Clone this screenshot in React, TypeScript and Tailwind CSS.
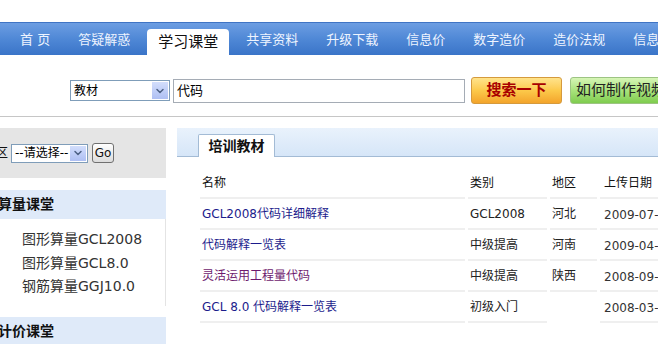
import { ChevronDown } from "lucide-react";

const FONT = "font-['DejaVu_Sans','Noto_Sans_CJK_SC',sans-serif]";

const NAV = ["首 页", "答疑解惑", "学习课堂", "共享资料", "升级下载", "信息价", "数字造价", "造价法规", "信息"];

const ROWS = [
  { name: "GCL2008代码详细解释", kind: "GCL2008", area: "河北", date: "2009-07-15", visited: false },
  { name: "代码解释一览表", kind: "中级提高", area: "河南", date: "2009-04-21", visited: false },
  { name: "灵活运用工程量代码", kind: "中级提高", area: "陕西", date: "2008-09-10", visited: true },
  { name: "GCL 8.0 代码解释一览表", kind: "初级入门", area: "", date: "2008-03-06", visited: false },
];

function FakeSelect({ value, width, height }: { value: string; width: string; height: string }) {
  return (
    <div className={`flex ${width} ${height} shrink-0 items-stretch border border-[#7f9db9] bg-white`}>
      <span className="flex flex-1 items-center pl-[3px] text-[12px] text-black">{value}</span>
      <span className="m-px flex w-[16px] items-center justify-center bg-gradient-to-b from-[#d3defc] to-[#aebff3]">
        <ChevronDown className="h-3 w-3 text-[#4d6185]" strokeWidth={3} />
      </span>
    </div>
  );
}

function SideHeader({ title }: { title: string }) {
  return (
    <div className="flex h-[29px] items-center bg-[#dfeaf9] pl-[10px] text-[14px] font-bold text-[#111]">{title}</div>
  );
}

export default function App() {
  return (
    <div className={`h-[344px] w-[658px] overflow-hidden bg-white ${FONT}`}>
      <div className="h-[22px]" />

      {/* main nav */}
      <div className="flex h-[33px] items-end gap-[28px] border-t border-[#3f74c4] bg-gradient-to-b from-[#6c9de2] via-[#4f88d6] to-[#3a74c8] pl-[20px] whitespace-nowrap">
        {NAV.map((item) =>
          item === "学习课堂" ? (
            <div
              key={item}
              className="-mx-[11px] flex h-[26px] shrink-0 items-center rounded-t-[4px] bg-white px-[11px] text-[15px] text-[#111]"
            >
              {item}
            </div>
          ) : (
            <div key={item} className="flex h-[31px] shrink-0 items-center text-[13px] text-[#eef4ff]">
              {item}
            </div>
          )
        )}
      </div>

      {/* search row */}
      <div className="h-[62px] border-b border-[#c6c6c6] pt-[22px]">
        <div className="flex h-[27px] items-center whitespace-nowrap">
          <div className="ml-[70px] shrink-0">
            <FakeSelect value="教材" width="w-[100px]" height="h-[21px]" />
          </div>
          <div className="ml-[3px] flex h-[24px] w-[292px] shrink-0 items-center border border-[#a5acb5] pl-[3px] text-[13px] text-black">
            代码
          </div>
          <button className="ml-[6px] h-[27px] w-[91px] shrink-0 rounded-[3px] border border-[#d59a3d] bg-gradient-to-b from-[#ffe38a] via-[#fcc94a] to-[#f3a42b] text-[15px] font-bold text-[#a80000]">
            搜索一下
          </button>
          <button className="ml-[8px] h-[27px] w-[100px] shrink-0 rounded-[3px] border border-[#9dc483] bg-gradient-to-b from-[#d6f5b6] via-[#a9e37c] to-[#7fcc4e] pl-[5px] text-left text-[15px] text-[#222]">
            如何制作视频
          </button>
        </div>
      </div>

      <div className="flex">
        {/* left column */}
        <div className="-ml-[40px] mt-[11px] w-[206px] shrink-0">
          <div className="flex h-[50px] items-center bg-[#e5e5e5] pl-[12px] text-[12px] whitespace-nowrap">
            <span className="text-[#111]">按地区</span>
            <div className="ml-[3px]">
              <FakeSelect value="--请选择--" width="w-[77px]" height="h-[19px]" />
            </div>
            <button className="ml-[4px] h-[20px] w-[22px] rounded-[3px] border border-[#707070] bg-gradient-to-b from-white to-[#dcdcdc] text-[12px] text-[#111]">
              Go
            </button>
          </div>

          <div className="mt-[12px]">
            <SideHeader title="工程算量课堂" />
            <div className="flex flex-col border-r border-[#e4e4e4] pb-[7px] pl-[62px] pt-[9px] text-[14px] leading-[23.5px] text-[#333]">
              <span>图形算量GCL2008</span>
              <span>图形算量GCL8.0</span>
              <span>钢筋算量GGJ10.0</span>
            </div>
          </div>

          <div className="mt-[11px]">
            <SideHeader title="工程计价课堂" />
          </div>
        </div>

        {/* right column */}
        <div className="ml-[11px] mt-[11px] flex-1">
          <div className="flex h-[29px] items-end border-b border-[#a3bbd5] bg-gradient-to-b from-[#e9f2fc] to-[#d6e6f8] pl-[21px]">
            <div className="-mb-px flex h-[23px] w-[77px] items-center justify-center rounded-t-[2px] border border-b-0 border-[#a3bbd5] bg-white text-[14px] font-bold text-[#111]">
              培训教材
            </div>
          </div>

          <div className="mt-[11px] grid grid-cols-[265px_79px_47px_1fr] gap-x-[3px] pl-[23px] text-[12px] whitespace-nowrap">
            <div className="flex h-[31px] items-center border-b-2 border-[#efefef] pl-[2px] text-[#111]">名称</div>
            <div className="flex h-[31px] items-center border-b-2 border-[#efefef] pl-[2px] text-[#111]">类别</div>
            <div className="flex h-[31px] items-center border-b-2 border-[#efefef] pl-[2px] text-[#111]">地区</div>
            <div className="flex h-[31px] items-center border-b-2 border-[#efefef] pl-[4px] text-[#111]">上传日期</div>
            {ROWS.map((r) => (
              <>
                <div
                  key={r.name}
                  className={`flex h-[31px] items-center border-b-2 border-[#efefef] pl-[2px] ${r.visited ? "text-[#6e1a6e]" : "text-[#1c1c8c]"}`}
                >
                  {r.name}
                </div>
                <div className="flex h-[31px] items-center border-b-2 border-[#efefef] pl-[2px] text-[#222]">{r.kind}</div>
                <div className={`flex h-[31px] items-center pl-[2px] text-[#222] ${r.area ? "border-b-2 border-[#efefef]" : ""}`}>
                  {r.area}
                </div>
                <div className="flex h-[31px] items-center border-b-2 border-[#efefef] pl-[4px] pt-[2px] text-[#333]">{r.date}</div>
              </>
            ))}
          </div>
        </div>
      </div>
    </div>
  );
}
